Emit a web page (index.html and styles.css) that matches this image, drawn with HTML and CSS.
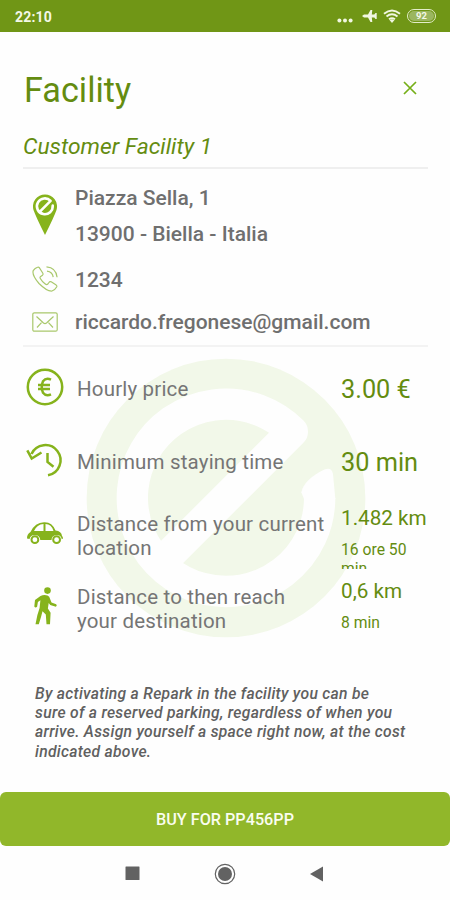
FILE: index.html
```html
<!DOCTYPE html>
<html lang="en">
<head>
<meta charset="utf-8">
<title>Facility</title>
<link rel="stylesheet" href="styles.css">
</head>
<body>
<div class="screen">
  <header class="status">
    <span class="clock">22:10</span>
    <div class="indicators">
      <svg class="dots" width="16" height="5" viewBox="0 0 16 5"><circle cx="2.4" cy="2.5" r="2"/><circle cx="8" cy="2.5" r="2"/><circle cx="13.6" cy="2.5" r="2"/></svg>
      <svg class="plane" width="15" height="14" viewBox="0 0 15 14"><path d="M0 7 2 5.600H6L8.500 1h1.800L9.800 5.600h2.500L13.500 4h1.200v6h-1.200l-1.200-1.600H9.800L10.300 13H8.500L6 8.400H2z"/></svg>
      <svg class="wifi" width="18" height="14" viewBox="0 0 18 14"><path d="M1 4.800Q9-1.800 17 4.800M3.500 7.500Q9 3 14.500 7.500M6 10.200Q9 8 12 10.200"/><path class="solid" d="m6.500 11 2.500 3 2.500-3Q9 9.500 6.500 11z"/></svg>
      <span class="battery">92</span>
    </div>
  </header>
  <main>
    <div class="heading">
      <h1>Facility</h1>
      <svg class="close" width="14" height="14" viewBox="0 0 14 14"><path d="m1 1 12 12M13 1 1 13"/></svg>
    </div>
    <h2>Customer Facility 1</h2>
    <section class="contact">
      <div class="row address">
        <svg class="pin" width="26" height="42" viewBox="0 0 26 42"><path d="M13 .5a12 12 0 0 1 11.500 15.500Q22 23 13 41 4 23 1.500 16A12 12 0 0 1 13 .5z"/><path class="mark" d="M20.700 11.500A7.900 7.900 0 1 1 18.600 6.900L7.400 18.100"/></svg>
        <p>Piazza Sella, 1<br>13900 - Biella - Italia</p>
      </div>
      <div class="row phone">
        <svg class="line" width="26" height="26" viewBox="0 0 26 26"><path d="M5.500 1.200Q3 2 1.200 4.700-.2 9 7 17.500 15 25.500 20 25q3-1 4.800-4.300.3-1-1-1.900l-4.600-3q-1.400-.7-2.300.7l-1.300 1.800q-1 .8-2.300-.3-3.500-2.700-5-5.500-.7-1.200.4-2.100l1.800-1.200q1-1 .2-2.200L7.300 1.700q-.7-1-1.800-.5zM14.500.8q9.500.7 10.600 10.500M15 5.200q5.500.8 6.200 6"/></svg>
        <p>1234</p>
      </div>
      <div class="row mail">
        <svg class="line" width="26" height="20" viewBox="0 0 26 20"><rect x=".8" y=".8" width="24.400" height="18.400" rx="1.500"/><path d="m4.500 4.500 7 6.500q1.500 1.300 3 0l7-6.500M5 15.500l4.500-4.800M21 15.500l-4.500-4.800"/></svg>
        <p>riccardo.fregonese@gmail.com</p>
      </div>
    </section>
    <section class="details">
      <svg class="watermark" width="280" height="280" viewBox="35 37 840 840"><circle cx="455" cy="457" r="418"/><path d="M736 457A281 281 0 1 1 654 258L256 656"/><path class="tip" d="M689 460 681 440Q690 400 752 371 772 364 776 385L783 460z"/></svg>
      <div class="item">
        <svg width="38" height="38" viewBox="0 0 38 38"><circle class="stroke" cx="19" cy="19" r="17.200"/><path class="stroke" d="M25 11.600Q20 9.300 17 13.200q-2.500 5.800 0 11.600 3 3.900 8 1.600M12 17H24M12 21H24"/></svg>
        <p>Hourly price</p>
        <div class="value"><strong>3.00 €</strong></div>
      </div>
      <div class="item">
        <svg width="38" height="38" viewBox="0 0 38 38"><path class="stroke" d="M5.500 13A15.200 15.200 0 1 1 22 34.300M1.300 9.300 5.700 17.500 15.500 11.500M21.500 12v9l6 4.800"/></svg>
        <p>Minimum staying time</p>
        <div class="value"><strong>30 min</strong></div>
      </div>
      <div class="item pair">
        <svg width="38" height="38" viewBox="0 0 38 38"><path fill-rule="evenodd" d="M1 24.500q-.2-4.500 3.500-6.500Q9 8.500 18 8.300q8-.5 11.500 8.200 6 .5 6.500 5.500 1 .5 1 2.500l-1.200.8a5.200 5.200 0 0 0-10.300.7H14.300A5.500 5.500 0 0 0 3.500 25zM8 17h9.500V10Q11 10.300 8 17zM19.500 10v7h8q-2-7-8-7z"/><circle cx="8.900" cy="25.700" r="3.400" class="wheel"/><circle cx="30.600" cy="25.700" r="3.400" class="wheel"/></svg>
        <p>Distance from your current<br>location</p>
        <div class="value"><b>1.482 km</b><small>16 ore 50<br>min</small></div>
      </div>
      <div class="item pair">
        <svg width="38" height="38" viewBox="0 0 38 38"><circle cx="21.500" cy="3.600" r="3.300"/><path d="M14.500 9Q18 7.300 21.500 8.500q2 .7 2.800 4l1.200 2.900 4.700 1.800q1.300 1.200-.3 2.600l-5.700-1.700-1.500-2-.8 5.400 2.700 4.200L24 37.300h-3.500l-.7-9.800-3.300-3.200L15 30l-2.200 7.300H9.500L11.400 28l2.200-7 .8-7.800-2.500 1.800-.8 4.800q-1.700 1.500-2.800-.2l.7-6.500z"/></svg>
        <p>Distance to then reach<br>your destination</p>
        <div class="value"><b>0,6 km</b><small>8 min</small></div>
      </div>
    </section>
    <p class="note">By activating a Repark in the facility you can be<br>sure of a reserved parking, regardless of when you<br>arrive. Assign yourself a space right now, at the cost<br>indicated above.</p>
  </main>
  <button class="buy">BUY FOR PP456PP</button>
  <nav>
    <svg width="22" height="22" viewBox="0 0 22 22"><rect x="3.500" y="3.500" width="14" height="13.500" rx=".5"/></svg>
    <svg width="22" height="22" viewBox="0 0 22 22"><circle cx="11" cy="11" r="9.700" class="ring"/><circle cx="11" cy="11" r="7"/></svg>
    <svg width="22" height="22" viewBox="0 0 22 22"><path d="M17 3.500v15L4 11z"/></svg>
  </nav>
</div>
</body>
</html>
```
FILE: styles.css
```css
* { box-sizing: border-box; }
body, h1, h2, p { margin: 0; }
body { font-family: Roboto, sans-serif; background: #fefefe; color: #6f6f6f; }
svg { display: block; flex: none; }
.screen { width: 450px; height: 900px; display: flex; flex-direction: column; overflow: hidden; }

.status { height: 32px; flex: none; background: #709616; color: #f4f8e8; display: flex; align-items: center; justify-content: space-between; padding: 0 14px 0 15px; }
.clock { font-size: 14px; font-weight: 700; letter-spacing: .2px; padding-top: 1px; }
.indicators { display: flex; align-items: center; }
.indicators svg { fill: #f1f7e2; }
.dots { margin: 8px 9px 0 0; }
.plane { margin-right: 6px; }
.wifi { margin-right: 6px; }
.wifi path { fill: none; stroke: #f1f7e2; stroke-width: 1.900; }
.wifi .solid { fill: #f1f7e2; stroke: none; }
.battery { width: 29px; height: 14px; border: 1.500px solid #e3edc9; border-radius: 7px; background: #9bb660; background-clip: content-box; padding: 1px; font-size: 9.500px; line-height: 10.500px; font-weight: 700; text-align: center; }

main { flex: none; height: 760px; padding: 0 22px 0 23px; }
.heading { height: 90px; padding: 36px 11px 0 1px; display: flex; justify-content: space-between; }
h1 { font-size: 34.200px; line-height: 44px; font-weight: 400; color: #648c10; }
.close { margin-top: 13px; fill: none; stroke: #76af18; stroke-width: 1.700; }
h2 { height: 47px; border-bottom: 2px solid #efefef; font-size: 22.800px; line-height: 49px; font-weight: 400; font-style: italic; color: #648c10; }

.contact { height: 178px; border-bottom: 2px solid #f3f3f3; padding-top: 11px; font-size: 21px; font-weight: 500; }
.row { display: flex; align-items: center; gap: 17px; padding-left: 9px; }
.address { height: 73px; line-height: 35.500px; }
.address svg { margin-bottom: 4px; }
.phone { height: 46px; margin-top: 4px; }
.phone svg { margin-bottom: 3px; }
.mail { height: 38px; }
.mail svg { margin-bottom: 1px; }

.pin { fill: #86b31c; }
.pin .mark { fill: none; stroke: #fff; stroke-width: 2.600; stroke-linecap: round; stroke-linejoin: round; }
.line { fill: none; stroke: #a9c86c; stroke-width: 1.200; }

.details { position: relative; height: 294px; padding-top: 3px; }
.watermark { position: absolute; left: 63px; top: 11px; fill: #f2f8e9; }
.watermark path { fill: none; stroke: #fefefe; stroke-width: 94; stroke-linejoin: round; }
.watermark .tip { fill: #fefefe; stroke: none; }
.item { position: relative; height: 73px; display: grid; grid-template: 73px / 54px 264px 1fr; align-items: center; overflow: hidden; }
.item svg { margin-left: 3px; fill: #86b31c; }
.item .stroke { fill: none; stroke: #86b31c; stroke-width: 2.500; }
.item .wheel { fill: #fff; stroke: #86b31c; stroke-width: 2; }
.item p { font-size: 20.500px; line-height: 24px; letter-spacing: .18px; padding-top: 4px; white-space: nowrap; color: #757575; }
.item.pair p { padding-top: 6px; }
.value { color: #648c10; }
.value strong { display: block; font-size: 25.300px; line-height: 30px; font-weight: 400; padding-top: 7px; }
.pair .value { align-self: start; padding-top: 10px; }
.value b { display: block; font-size: 20.700px; line-height: 24px; font-weight: 400; }
.value small { display: block; font-size: 15.700px; line-height: 18.500px; margin-top: 11px; }

.note { margin: 43px 0 0 12px; font-size: 15.700px; letter-spacing: .29px; line-height: 19.200px; font-weight: 500; font-style: italic; color: #606060; white-space: nowrap; }
.buy { width: 450px; height: 54px; flex: none; border: 0; border-radius: 6px; background: #91b72a; color: #fafdf0; font: 500 16.200px Roboto, sans-serif; }
nav { flex: 1; display: flex; justify-content: center; align-items: center; gap: 70px; padding-top: 1px; fill: #626262; }
nav .ring { fill: none; stroke: #626262; stroke-width: 1.200; }
```
